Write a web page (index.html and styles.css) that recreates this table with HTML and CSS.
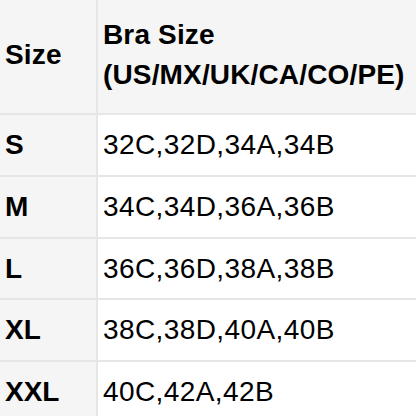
FILE: index.html
```html
<!DOCTYPE html>
<html lang="en">
<head>
<meta charset="utf-8">
<title>Size chart</title>
<link rel="stylesheet" href="styles.css">
</head>
<body>
<table class="size-table">
  <thead>
    <tr>
      <th class="label">Size</th>
      <th class="value">Bra Size<br>(US/MX/UK/CA/CO/PE)</th>
    </tr>
  </thead>
  <tbody>
    <tr><th class="label">S</th><td class="value">32C,32D,34A,34B</td></tr>
    <tr><th class="label">M</th><td class="value">34C,34D,36A,36B</td></tr>
    <tr><th class="label">L</th><td class="value">36C,36D,38A,38B</td></tr>
    <tr><th class="label">XL</th><td class="value">38C,38D,40A,40B</td></tr>
    <tr><th class="label">XXL</th><td class="value">40C,42A,42B</td></tr>
  </tbody>
</table>
</body>
</html>
```
FILE: styles.css
```css
html, body {
  margin: 0;
  padding: 0;
  background: #ffffff;
  overflow: hidden;
}
.size-table {
  width: 416px;
  border-collapse: separate;
  border-spacing: 0;
  table-layout: fixed;
  font-family: "Liberation Sans", Arial, sans-serif;
  font-size: 28px;
  line-height: 40px;
  color: #000;
}
.size-table th,
.size-table td {
  text-align: left;
  vertical-align: middle;
  white-space: nowrap;
  box-sizing: border-box;
  border-bottom: 2px solid #e6e6e6;
  padding: 10px 5px 9.75px 5px;
}
.size-table thead th {
  background: #f5f5f5;
  font-weight: bold;
  padding-top: 15px;
  padding-bottom: 18px;
  letter-spacing: 0.15px;
}
.size-table .label {
  width: 98px;
  background: #f5f5f5;
  font-weight: bold;
  border-right: 2px solid #e6e6e6;
}
.size-table td.value {
  background: #ffffff;
  font-weight: normal;
  letter-spacing: 0.4px;
}
```
